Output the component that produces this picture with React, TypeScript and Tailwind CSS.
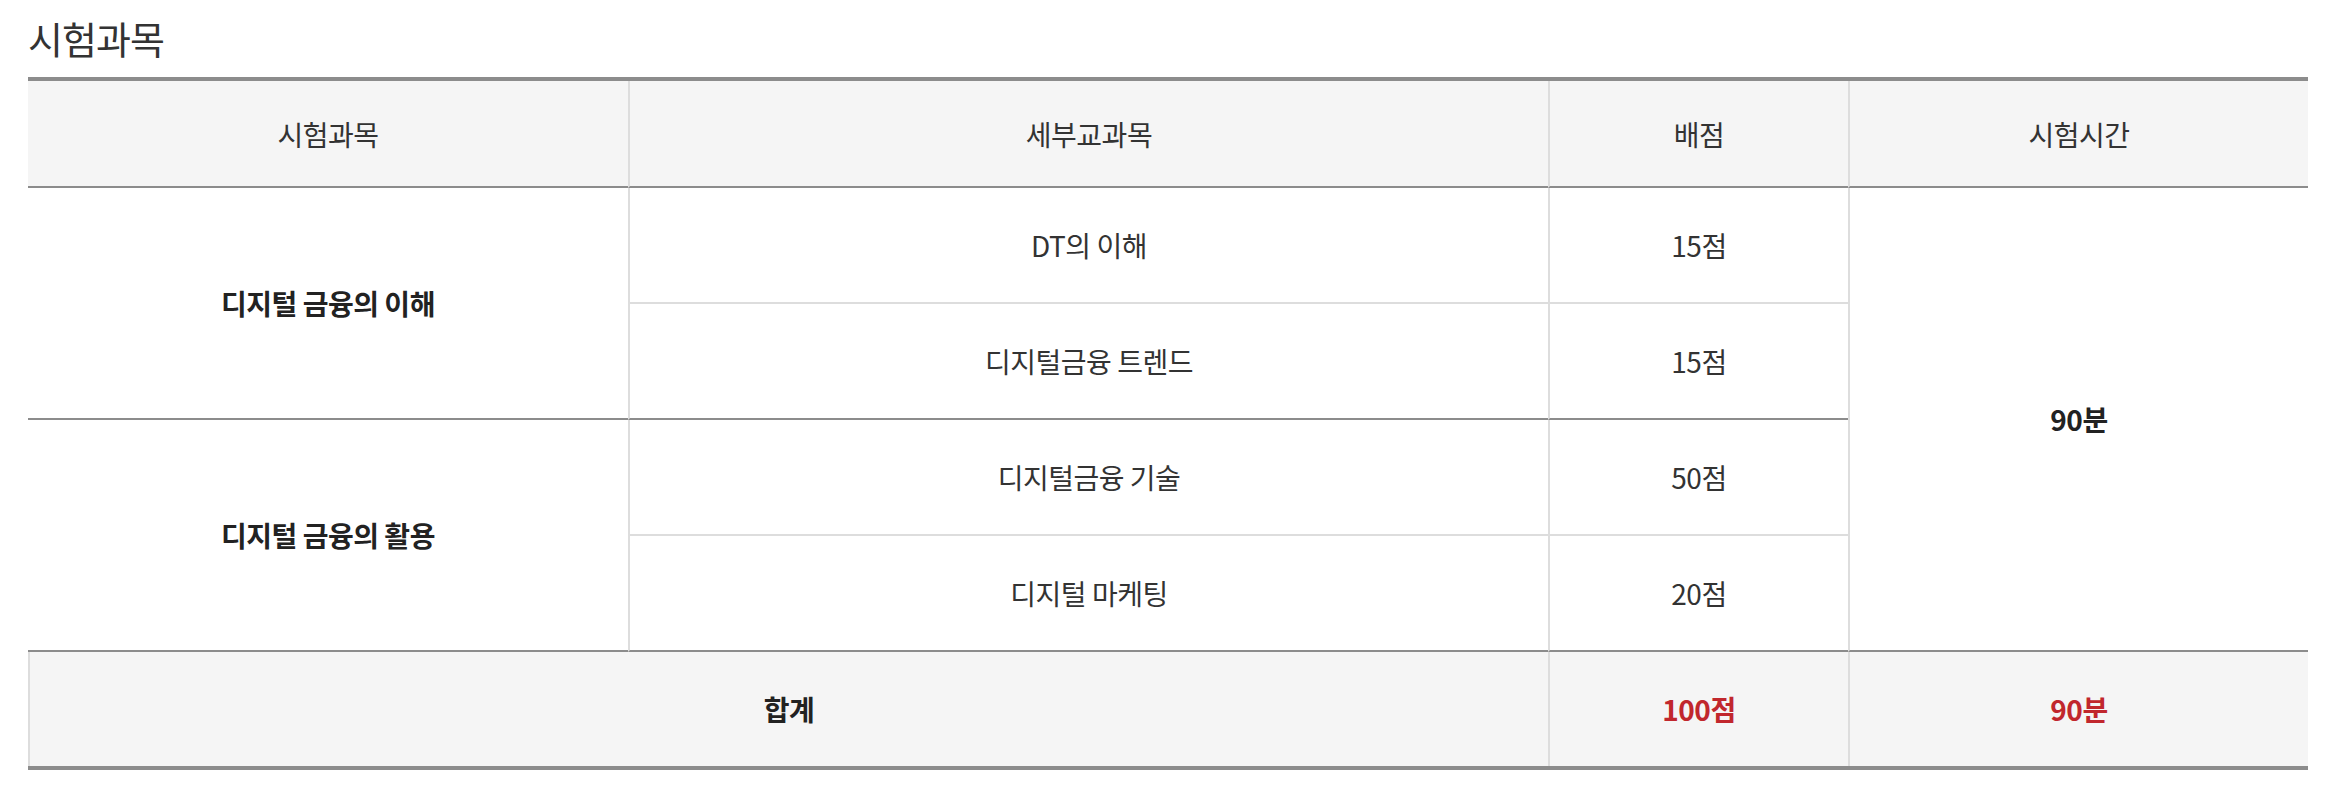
import React from "react";

const F = { fontFamily: '"Noto Sans CJK KR", "Noto Sans", sans-serif' };

export default function App() {
  const cell = "flex items-center justify-center text-center";
  return (
    <div className="bg-white w-[2334px] h-[790px] text-[#333]" style={F}>
      <div className="pl-[28px] pr-[26px] pt-[12px]">
        <h2 className="text-[38px] leading-[52px] font-normal tracking-[-1px] text-[#333] mb-[13px]">시험과목</h2>
        <div className="grid grid-cols-[600px_920px_300px_460px] grid-rows-[107px_116px_116px_116px_116px_114px] border-t-4 border-b-4 border-[#8c8c8c] text-[28px] tracking-[-0.5px]">
          {/* header */}
          <div className={`${cell} bg-[#f5f5f5] border-b-2 border-[#8c8c8c]`}>시험과목</div>
          <div className={`${cell} bg-[#f5f5f5] border-b-2 border-b-[#8c8c8c] border-l-2 border-l-[#dddddd]`}>세부교과목</div>
          <div className={`${cell} bg-[#f5f5f5] border-b-2 border-b-[#8c8c8c] border-l-2 border-l-[#dddddd]`}>배점</div>
          <div className={`${cell} bg-[#f5f5f5] border-b-2 border-b-[#8c8c8c] border-l-2 border-l-[#dddddd]`}>시험시간</div>

          {/* group 1 */}
          <div className={`${cell} row-span-2 border-b-2 border-[#8c8c8c] font-bold text-[#222]`}>디지털 금융의 이해</div>
          <div className={`${cell} border-b-2 border-b-[#dddddd] border-l-2 border-l-[#dddddd]`}>DT의 이해</div>
          <div className={`${cell} border-b-2 border-b-[#dddddd] border-l-2 border-l-[#dddddd]`}>15점</div>
          <div className={`${cell} row-span-4 border-b-2 border-b-[#8c8c8c] border-l-2 border-l-[#dddddd] font-bold text-[#222]`}>90분</div>
          <div className={`${cell} border-b-2 border-b-[#8c8c8c] border-l-2 border-l-[#dddddd]`}>디지털금융 트렌드</div>
          <div className={`${cell} border-b-2 border-b-[#8c8c8c] border-l-2 border-l-[#dddddd]`}>15점</div>

          {/* group 2 */}
          <div className={`${cell} row-span-2 border-b-2 border-[#8c8c8c] font-bold text-[#222]`}>디지털 금융의 활용</div>
          <div className={`${cell} border-b-2 border-b-[#dddddd] border-l-2 border-l-[#dddddd]`}>디지털금융 기술</div>
          <div className={`${cell} border-b-2 border-b-[#dddddd] border-l-2 border-l-[#dddddd]`}>50점</div>
          <div className={`${cell} border-b-2 border-b-[#8c8c8c] border-l-2 border-l-[#dddddd]`}>디지털 마케팅</div>
          <div className={`${cell} border-b-2 border-b-[#8c8c8c] border-l-2 border-l-[#dddddd]`}>20점</div>

          {/* footer */}
          <div className={`${cell} col-span-2 bg-[#f5f5f5] border-l-2 border-l-[#dddddd] font-bold text-[#222]`}>합계</div>
          <div className={`${cell} bg-[#f5f5f5] border-l-2 border-l-[#dddddd] font-bold text-[#c1272d]`}>100점</div>
          <div className={`${cell} bg-[#f5f5f5] border-l-2 border-l-[#dddddd] font-bold text-[#c1272d]`}>90분</div>
        </div>
      </div>
    </div>
  );
}
